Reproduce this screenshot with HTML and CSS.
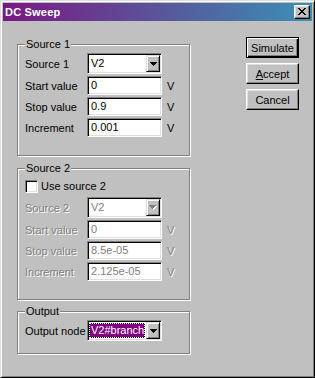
FILE: index.html
```html
<!DOCTYPE html>
<html>
<head>
    <title>DC Sweep</title>
    <link rel="stylesheet" href="styles.css">
</head>
<body>
    <div class="window">
        <div class="titlebar">
            <span class="title">DC Sweep</span>
            <div class="close">
                <svg width="8" height="7" viewBox="0 0 8 7" shape-rendering="crispEdges"><path d="M0 0h2v1h-2zM6 0h2v1h-2zM1 1h2v1h-2zM5 1h2v1h-2zM2 2h4v1h-4zM3 3h2v1h-2zM2 4h4v1h-4zM1 5h2v1h-2zM5 5h2v1h-2zM0 6h2v1h-2zM6 6h2v1h-2z" fill="#000"/></svg>
            </div>
        </div>

        <div class="client">
            <div class="groups">
                <fieldset class="group">
                    <legend>Source 1</legend>
                    <div class="rows">
                        <span class="lbl">Source 1</span>
                        <div class="combo">
                            <span class="combo-text">V2</span>
                            <span class="combo-btn"><svg width="7" height="4" viewBox="0 0 7 4" shape-rendering="crispEdges"><path d="M0 0h7v1h-1v1h-1v1h-1v1h-1v-1h-1v-1h-1v-1h-1z" fill="#000"/></svg></span>
                        </div>
                        <span></span>
                        <span class="lbl">Start value</span>
                        <div class="field">0</div>
                        <span class="unit">V</span>
                        <span class="lbl">Stop value</span>
                        <div class="field">0.9</div>
                        <span class="unit">V</span>
                        <span class="lbl">Increment</span>
                        <div class="field">0.001</div>
                        <span class="unit">V</span>
                    </div>
                </fieldset>

                <fieldset class="group group-2">
                    <legend>Source 2</legend>
                    <div class="rows">
                        <div class="check-row">
                            <span class="check"></span>
                            <span>Use source 2</span>
                        </div>
                        <span class="lbl off">Source 2</span>
                        <div class="combo">
                            <span class="combo-text off">V2</span>
                            <span class="combo-btn"><svg width="8" height="5" viewBox="0 0 8 5" shape-rendering="crispEdges"><path d="M1 1h7v1h-1v1h-1v1h-1v1h-1v-1h-1v-1h-1v-1h-1z" fill="#fff"/><path d="M0 0h7v1h-1v1h-1v1h-1v1h-1v-1h-1v-1h-1v-1h-1z" fill="#808080"/></svg></span>
                        </div>
                        <span></span>
                        <span class="lbl off">Start value</span>
                        <div class="field off">0</div>
                        <span class="unit off">V</span>
                        <span class="lbl off">Stop value</span>
                        <div class="field off">8.5e-05</div>
                        <span class="unit off">V</span>
                        <span class="lbl off">Increment</span>
                        <div class="field off">2.125e-05</div>
                        <span class="unit off">V</span>
                    </div>
                </fieldset>

                <fieldset class="group group-3">
                    <legend>Output</legend>
                    <div class="rows">
                        <span class="lbl">Output node</span>
                        <div class="combo">
                            <span class="combo-text selected">V2#branch</span>
                            <span class="combo-btn"><svg width="7" height="4" viewBox="0 0 7 4" shape-rendering="crispEdges"><path d="M0 0h7v1h-1v1h-1v1h-1v1h-1v-1h-1v-1h-1v-1h-1z" fill="#000"/></svg></span>
                        </div>
                        <span></span>
                    </div>
                </fieldset>
            </div>

            <div class="buttons">
                <button class="btn btn-default">Simulate</button>
                <button class="btn"><u>A</u>ccept</button>
                <button class="btn">Cancel</button>
            </div>
        </div>
    </div>
</body>
</html>
```

FILE: styles.css
```css
body { margin: 0; font-family: "Liberation Sans", Arial, sans-serif; font-size: 11px; color: #000; background: #c0c0c0; }
.window { width: 315px; height: 378px; box-sizing: border-box; background: #c0c0c0; border: 1px solid; border-color: #dfdfdf #000 #000 #dfdfdf; box-shadow: inset 1px 1px 0 #fff, inset -1px -1px 0 #808080; padding: 2px; }

.titlebar { height: 18px; display: flex; align-items: center; padding: 0 2px 0 2px; background: linear-gradient(to right, #7a1882, #3a90b4); color: #fff; }
.title { flex: 1; font-weight: bold; font-size: 11px; letter-spacing: 0.2px; }
.close { width: 16px; height: 14px; box-sizing: border-box; display: flex; align-items: center; justify-content: center; background: #c0c0c0; border: 1px solid; border-color: #fff #000 #000 #fff; box-shadow: inset -1px -1px 0 #808080, inset 1px 1px 0 #dfdfdf; }
.close svg { display: block; margin: 0 0 1px 0; }

.client { display: flex; padding: 16px 0 0 14px; }
.groups { width: 174px; margin-top: 1px; display: flex; flex-direction: column; }
.buttons { margin-left: 55px; display: flex; flex-direction: column; gap: 5px; }

.group { margin: 0; width: 173px; box-sizing: border-box; padding: 2px 7px 18px; border: 1px solid #808080; box-shadow: 1px 1px 0 #fff, inset 1px 1px 0 #fff; }
.group legend { padding: 0 1px; line-height: 13px; background: #c0c0c0; }
.group-2 { margin-top: 6px; }
.group-3 { margin-top: 5px; padding-bottom: 12px; }

.rows { display: grid; grid-template-columns: 62px 75px auto; row-gap: 2px; align-items: center; }
.lbl { white-space: nowrap; }
.unit { padding-left: 5px; }
.off { color: #808080; text-shadow: 1px 1px 0 #fff; }

.check-row { grid-column: 1 / 4; height: 18px; display: flex; align-items: center; gap: 3px; }
.check { width: 13px; height: 13px; box-sizing: border-box; background: #fff; border: 1px solid; border-color: #808080 #fff #fff #808080; box-shadow: inset 1px 1px 0 #000, inset -1px -1px 0 #dfdfdf; }

.field { height: 19px; box-sizing: border-box; padding: 0 3px; line-height: 17px; background: #fff; border: 1px solid; border-color: #808080 #fff #fff #808080; box-shadow: inset 1px 1px 0 #000, inset -1px -1px 0 #dfdfdf; white-space: nowrap; overflow: hidden; }

.combo { height: 21px; box-sizing: border-box; display: flex; padding: 1px; background: #fff; border: 1px solid; border-color: #808080 #fff #fff #808080; box-shadow: inset 1px 1px 0 #000, inset -1px -1px 0 #dfdfdf; }
.combo-text { flex: 1; padding-left: 2px; line-height: 17px; white-space: nowrap; overflow: hidden; }
.combo-text.selected { margin: 1px 1px 1px 0; padding-left: 1px; line-height: 13px; color: #fff; border: 1px dotted #fff; background: linear-gradient(#800080, #800080) padding-box, #000 border-box; }
.combo-btn { width: 14px; display: flex; align-items: center; justify-content: center; box-sizing: border-box; background: #c0c0c0; border: 1px solid; border-color: #dfdfdf #000 #000 #dfdfdf; box-shadow: inset 1px 1px 0 #fff, inset -1px -1px 0 #808080; }

.btn { width: 53px; height: 21px; box-sizing: border-box; padding: 0; font: inherit; color: #000; background: #c0c0c0; border: 1px solid; border-color: #fff #000 #000 #fff; box-shadow: inset -1px -1px 0 #808080, inset 1px 1px 0 #dfdfdf; }
.btn-default { border-color: #000; box-shadow: inset 1px 1px 0 #fff, inset -1px -1px 0 #000, inset -2px -2px 0 #808080; }
```
